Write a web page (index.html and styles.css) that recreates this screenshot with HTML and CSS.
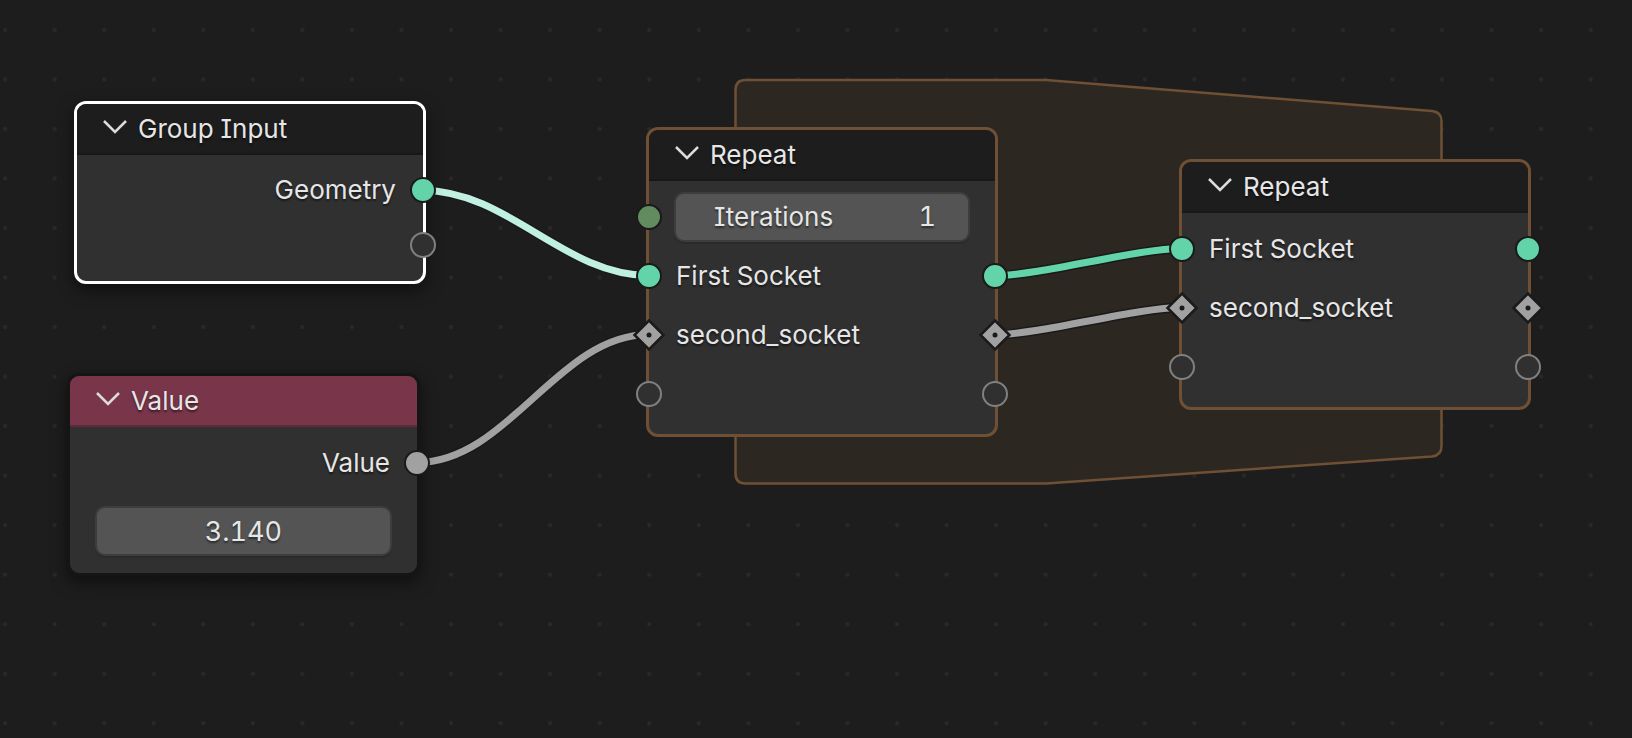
FILE: index.html
```
<!DOCTYPE html>
<html lang="en">
<head>
<meta charset="utf-8">
<title>Geometry Nodes</title>
<link rel="stylesheet" href="styles.css">
</head>
<body>
<main class="canvas">
  <svg class="layer" aria-hidden="true">
    <defs>
      <pattern id="grid" x="-19.7" y="5.1" width="49.55" height="49.52" patternUnits="userSpaceOnUse">
        <circle cx="24.8" cy="24.8" r="2.1" fill="#292929"/>
      </pattern>
    </defs>
    <rect width="100%" height="100%" fill="url(#grid)"/>
    <path class="zone" d="M745.5 80H1046L1432 111Q1441.500 112 1441.500 121V446Q1441.500 455.500 1432 456.500L1046 483.500H745.500Q735.500 483.500 735.500 473.500V90Q735.500 80 745.500 80Z"/>
    <g class="link-edge">
      <path d="M423 190.500C508 190.500 564 275.500 649 275.500"/>
      <path d="M417 462.500C508 462.500 558 334.500 649 334.500"/>
      <path d="M995 275.500C1042 275.500 1135 248.500 1182 248.500"/>
      <path d="M995 334.500C1042 334.500 1135 307.500 1182 307.500"/>
    </g>
    <g class="link">
      <path class="link-selected" d="M423 190.500C508 190.500 564 275.500 649 275.500"/>
      <path class="link-float" d="M417 462.500C508 462.500 558 334.500 649 334.500"/>
      <path class="link-geometry" d="M995 275.500C1042 275.500 1135 248.500 1182 248.500"/>
      <path class="link-float" d="M995 334.500C1042 334.500 1135 307.500 1182 307.500"/>
    </g>
  </svg>

  <section class="node node-input selected">
    <header class="head"><button class="fold" aria-label="Collapse Group Input"><svg viewBox="0 0 24 14"><path d="M1 1L12 12L23 1"/></svg></button><h2>Group Input</h2></header>
    <div class="body">
      <div class="row out">Geometry<i class="socket right geometry"></i></div>
      <div class="row"><i class="socket right empty"></i></div>
    </div>
  </section>

  <section class="node node-value">
    <header class="head"><button class="fold" aria-label="Collapse Value"><svg viewBox="0 0 24 14"><path d="M1 1L12 12L23 1"/></svg></button><h2>Value</h2></header>
    <div class="body">
      <div class="row out">Value<i class="socket right float"></i></div>
      <input class="field" type="text" value="3.140" aria-label="Value">
    </div>
  </section>

  <section class="node node-repeat-in zoned">
    <header class="head"><button class="fold" aria-label="Collapse Repeat"><svg viewBox="0 0 24 14"><path d="M1 1L12 12L23 1"/></svg></button><h2>Repeat</h2></header>
    <div class="body">
      <div class="row row-field"><i class="socket left integer"></i>
        <div class="field labelled"><label for="iterations">Iterations</label><input id="iterations" type="text" value="1"></div>
      </div>
      <div class="row"><i class="socket left geometry"></i>First Socket<i class="socket right geometry"></i></div>
      <div class="row"><svg class="diamond left" viewBox="0 0 34 34"><path d="M17 2.500L31.500 17L17 31.500L2.500 17Z"/><circle cx="17" cy="17" r="2.500"/></svg>second_socket<svg class="diamond right" viewBox="0 0 34 34"><path d="M17 2.500L31.500 17L17 31.500L2.500 17Z"/><circle cx="17" cy="17" r="2.500"/></svg></div>
      <div class="row"><i class="socket left empty"></i><i class="socket right empty"></i></div>
    </div>
  </section>

  <section class="node node-repeat-out zoned">
    <header class="head"><button class="fold" aria-label="Collapse Repeat"><svg viewBox="0 0 24 14"><path d="M1 1L12 12L23 1"/></svg></button><h2>Repeat</h2></header>
    <div class="body">
      <div class="row"><i class="socket left geometry"></i>First Socket<i class="socket right geometry"></i></div>
      <div class="row"><svg class="diamond left" viewBox="0 0 34 34"><path d="M17 2.500L31.500 17L17 31.500L2.500 17Z"/><circle cx="17" cy="17" r="2.500"/></svg>second_socket<svg class="diamond right" viewBox="0 0 34 34"><path d="M17 2.500L31.500 17L17 31.500L2.500 17Z"/><circle cx="17" cy="17" r="2.500"/></svg></div>
      <div class="row"><i class="socket left empty"></i><i class="socket right empty"></i></div>
    </div>
  </section>
</main>
</body>
</html>
```

FILE: styles.css
```
* { box-sizing: border-box; }
body {
  margin: 0;
  background: #1d1d1d;
  color: #e6e6e6;
  font: 26px/32px Inter, "Liberation Sans", sans-serif;
  font-feature-settings: "cv08", "tnum";
  text-shadow: 0 2px 2px rgba(0, 0, 0, .5);
}
.canvas { position: relative; min-height: 100vh; overflow: hidden; }
.layer { position: absolute; inset: 0; width: 100%; height: 100%; }
.zone { fill: #2d2721; stroke: #6f5034; stroke-width: 2.5; }
.link, .link-edge { fill: none; }
.link { stroke-width: 7; }
.link-edge { stroke: #1a1a1a; stroke-width: 10; }
.link-selected { stroke: #c0f0e1; }
.link-geometry { stroke: #63d4a9; }
.link-float { stroke: #a1a1a1; }

.node {
  position: absolute;
  width: 352px;
  border: 3px solid #151515;
  border-radius: 12px;
  background: #303030;
  box-shadow: 0 6px 16px rgba(0, 0, 0, .5);
}
.node-input { left: 74px; top: 101px; }
.node-value { left: 67px; top: 373px; width: 353px; }
.node-repeat-in { left: 646px; top: 127px; }
.node-repeat-out { left: 1179px; top: 159px; }
.selected { border-color: #fff; }
.zoned { border-color: #6f5034; box-shadow: none; }

.head {
  display: flex;
  align-items: center;
  gap: 11px;
  height: 51px;
  padding: 0 26px;
  border-bottom: 2px solid #181818;
  border-radius: 9px 9px 0 0;
  background: #1d1d1d;
}
.node-value .head { background: #79354a; border-color: #5f2b3c; }
.head h2 { margin: 0; font-size: 26px; font-weight: 400; }
.fold { display: flex; padding: 0 0 4px; border: 0; background: none; }
.fold svg { width: 24px; height: 14px; fill: none; stroke: #dcdcdc; stroke-width: 2.5; }

.body { padding: 6px 0 11px; }
.row {
  position: relative;
  display: flex;
  align-items: center;
  height: 59px;
  padding: 0 27px;
}
.row-field { padding: 0 25px; }
.out { justify-content: flex-end; }
.node-input .body { padding: 7px 0 9px; }
.node-input .row { height: 55px; }
.node-value .body { padding-bottom: 17px; }

.field {
  display: flex;
  align-items: center;
  width: 100%;
  height: 50px;
  border: 2px solid #3d3d3d;
  border-radius: 10px;
  background: #545454;
  box-shadow: 0 2px 0 #2a2a2a;
  color: inherit;
  font: inherit;
  font-feature-settings: inherit;
  text-shadow: inherit;
}
.node-value .field { width: 297px; margin: 14px 25px 0; font-size: 27px; text-align: center; }
.labelled { justify-content: space-between; padding: 0 32px 0 38px; }
.labelled input {
  width: 40px;
  padding: 0;
  border: 0;
  background: none;
  color: inherit;
  font: inherit;
  font-size: 27px;
  font-feature-settings: inherit;
  text-align: right;
  text-shadow: inherit;
}

.socket, .diamond { position: absolute; top: 50%; transform: translateY(-50%); }
.socket {
  width: 26px;
  height: 26px;
  border: 2px solid #1a1a1a;
  border-radius: 50%;
}
.socket.left { left: -13px; }
.socket.right { right: -13px; }
.geometry { background: #63d4a9; }
.float { background: #a1a1a1; }
.integer { background: #628b5f; }
.empty { border-color: #808080; background: #303030; }
.diamond { width: 34px; height: 34px; fill: #a1a1a1; stroke: #1a1a1a; stroke-width: 2.5; }
.diamond.left { left: -17px; }
.diamond.right { right: -17px; }
.diamond circle { fill: #1a1a1a; stroke: none; }
```
